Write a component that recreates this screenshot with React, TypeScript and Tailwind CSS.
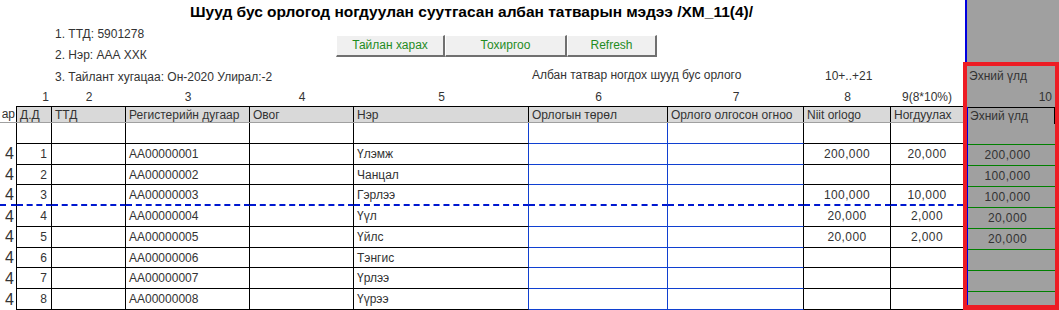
import React from 'react'

const GRID = 'grid grid-cols-[17px_35px_74px_124px_104px_175px_139px_136px_87px_72px]'

type Row = {
  dd: number
  reg: string
  name: string
  total?: string
  tax?: string
  start?: string
}

const ROWS: Row[] = [
  { dd: 1, reg: 'AA00000001', name: 'Үлэмж', total: '200,000', tax: '20,000', start: '200,000' },
  { dd: 2, reg: 'AA00000002', name: 'Чанцал', start: '100,000' },
  { dd: 3, reg: 'AA00000003', name: 'Гэрлээ', total: '100,000', tax: '10,000', start: '100,000' },
  { dd: 4, reg: 'AA00000004', name: 'Үүл', total: '20,000', tax: '2,000', start: '20,000' },
  { dd: 5, reg: 'AA00000005', name: 'Үйлс', total: '20,000', tax: '2,000', start: '20,000' },
  { dd: 6, reg: 'AA00000006', name: 'Тэнгис' },
  { dd: 7, reg: 'AA00000007', name: 'Үрлээ' },
  { dd: 8, reg: 'AA00000008', name: 'Үүрээ' },
]

const HEADERS = ['Д.Д', 'ТТД', 'Регистерийн дугаар', 'Овог', 'Нэр', 'Орлогын төрөл', 'Орлого олгосон огноо', 'Niit orlogo', 'Ногдуулах']

const DASH = 'border-b-2 [border-bottom-style:dashed] border-b-[#0018d0]'

function DataRow({ row, dashed }: { row: Row; dashed: boolean }) {
  // bottom border per column group; row 3 gets the blue dashed page-break line
  const blk = dashed ? DASH : 'border-b border-b-black'
  const blu = dashed ? DASH : 'border-b border-b-[#1040d0]'
  return (
    <div className={`${GRID} h-[21px]`}>
      <div className={`border-r border-r-black flex items-center justify-end pr-[2px] text-[16px] text-[#333] ${dashed ? DASH : ''}`}>4</div>
      <div className={`border-r border-r-black ${blk} flex items-center justify-end pr-[4px]`}>{row.dd}</div>
      <div className={`border-r border-r-black ${blk}`} />
      <div className={`border-r border-r-black ${blk} flex items-center pl-[3px]`}>{row.reg}</div>
      <div className={`border-r border-r-black ${blk}`} />
      <div className={`border-r border-r-[#1040d0] ${blk} flex items-center pl-[3px]`}>{row.name}</div>
      <div className={`border-r border-r-[#1040d0] ${blu}`} />
      <div className={`border-r border-r-black ${blu}`} />
      <div className={`border-r border-r-black ${blk} flex items-center justify-center tracking-[0.4px]`}>{row.total}</div>
      <div className={`${blk} flex items-center justify-center tracking-[0.4px]`}>{row.tax}</div>
    </div>
  )
}

export default function App() {
  return (
    <div className="w-[1059px] h-[310px] overflow-hidden bg-white flex text-[12px] text-[#333] leading-none" style={{ fontFamily: '"Liberation Sans", Arial, sans-serif' }}>
      {/* Main sheet */}
      <div className="w-[963px] flex flex-col">
        <div className="h-[24px] flex items-center justify-center pr-[20px] text-[15.5px] font-bold text-black">
          Шууд бус орлогод ногдуулан суутгасан албан татварын мэдээ /ХМ_11(4)/
        </div>

        <div className="h-[42px] flex">
          <div className="w-[336px] pl-[55px] flex flex-col">
            <div className="h-[21px] flex items-center">1. ТТД: 5901278</div>
            <div className="h-[21px] flex items-center">2. Нэр: ААА ХХК</div>
          </div>
          <div className="mt-[11px] h-[22px] flex">
            {[
              ['Тайлан харах', 'w-[109px]'],
              ['Тохиргоо', 'w-[122px]'],
              ['Refresh', 'w-[90px]'],
            ].map(([label, w]) => (
              <button
                key={label}
                className={`${w} h-full bg-[#f0f0f0] border-t border-l border-t-white border-l-white border-r-2 border-b-2 border-r-[#707070] border-b-[#707070] text-[#1f8c1f] text-[12px]`}
              >
                {label}
              </button>
            ))}
          </div>
        </div>

        <div className="h-[22px] flex items-center">
          <div className="w-[532px] pl-[55px]">3. Тайлант хугацаа: Он-2020 Улирал:-2</div>
          <div className="w-[293px] -mt-[4px]">Албан татвар ногдох шууд бус орлого</div>
          <div className="-mt-[1px]">10+..+21</div>
        </div>

        <div className={`${GRID} h-[19px] items-center`}>
          <div />
          <div className="text-right pr-[3px]">1</div>
          <div className="text-center">2</div>
          <div className="text-center">3</div>
          <div className="text-center">4</div>
          <div className="text-center">5</div>
          <div className="text-center">6</div>
          <div className="text-center">7</div>
          <div className="text-center">8</div>
          <div className="text-center">9(8*10%)</div>
        </div>

        {/* Header */}
        <div className={`${GRID} h-[17px] border-b border-b-[#a0a0a0]`}>
          <div className="flex items-center justify-end text-[12px] pr-[1px] border-r border-r-black">ар</div>
          {HEADERS.map((h, i) => (
            <div
              key={h}
              className={`bg-[#d9d9d9] border-t border-t-black flex items-center pl-[3px] whitespace-nowrap overflow-hidden ${i < HEADERS.length - 1 ? 'border-r border-r-black' : ''}`}
            >
              {h}
            </div>
          ))}
        </div>

        {/* Empty row */}
        <div className={`${GRID} h-[21px]`}>
          <div className="border-r border-r-black" />
          <div className="border-r border-r-black border-b border-b-black" />
          <div className="border-r border-r-black border-b border-b-black" />
          <div className="border-r border-r-black border-b border-b-black" />
          <div className="border-r border-r-black border-b border-b-black" />
          <div className="border-r border-r-[#1040d0] border-b border-b-black" />
          <div className="border-r border-r-[#1040d0] border-b border-b-[#1040d0]" />
          <div className="border-r border-r-black border-b border-b-[#1040d0]" />
          <div className="border-r border-r-black border-b border-b-black" />
          <div className="border-b border-b-black" />
        </div>

        {ROWS.map((r) => (
          <DataRow key={r.dd} row={r} dashed={r.dd === 3} />
        ))}
      </div>

      {/* Highlighted column */}
      <div className="w-[96px] flex flex-col">
        <div className="h-[62px] ml-[2px] border-l-2 border-l-[#0000e0] bg-[#a0a0a0] shrink-0" />
        <div className="flex-1 border-[5px] border-t-4 border-l-4 border-r-4 border-[#ed1c24] bg-[#a0a0a0] flex flex-col overflow-hidden">
          <div className="h-[20px] flex items-center pl-[2px] shrink-0">Эхний үлд</div>
          <div className="h-[21px] flex items-center justify-end pr-[3px] shrink-0">10</div>
          <div className="border-l border-l-[#0000e0] flex flex-col">
            <div className="h-[17px] border-t border-t-black border-r border-r-black flex items-center pl-[2px] shrink-0">Эхний үлд</div>
            <div className="h-[21px] border-b border-b-[#008000] shrink-0" />
            {ROWS.map((r) => (
              <div key={r.dd} className="h-[21px] border-b border-b-[#008000] flex items-center justify-center pr-[8px] tracking-[0.4px] shrink-0">
                {r.start}
              </div>
            ))}
          </div>
        </div>
      </div>
    </div>
  )
}
